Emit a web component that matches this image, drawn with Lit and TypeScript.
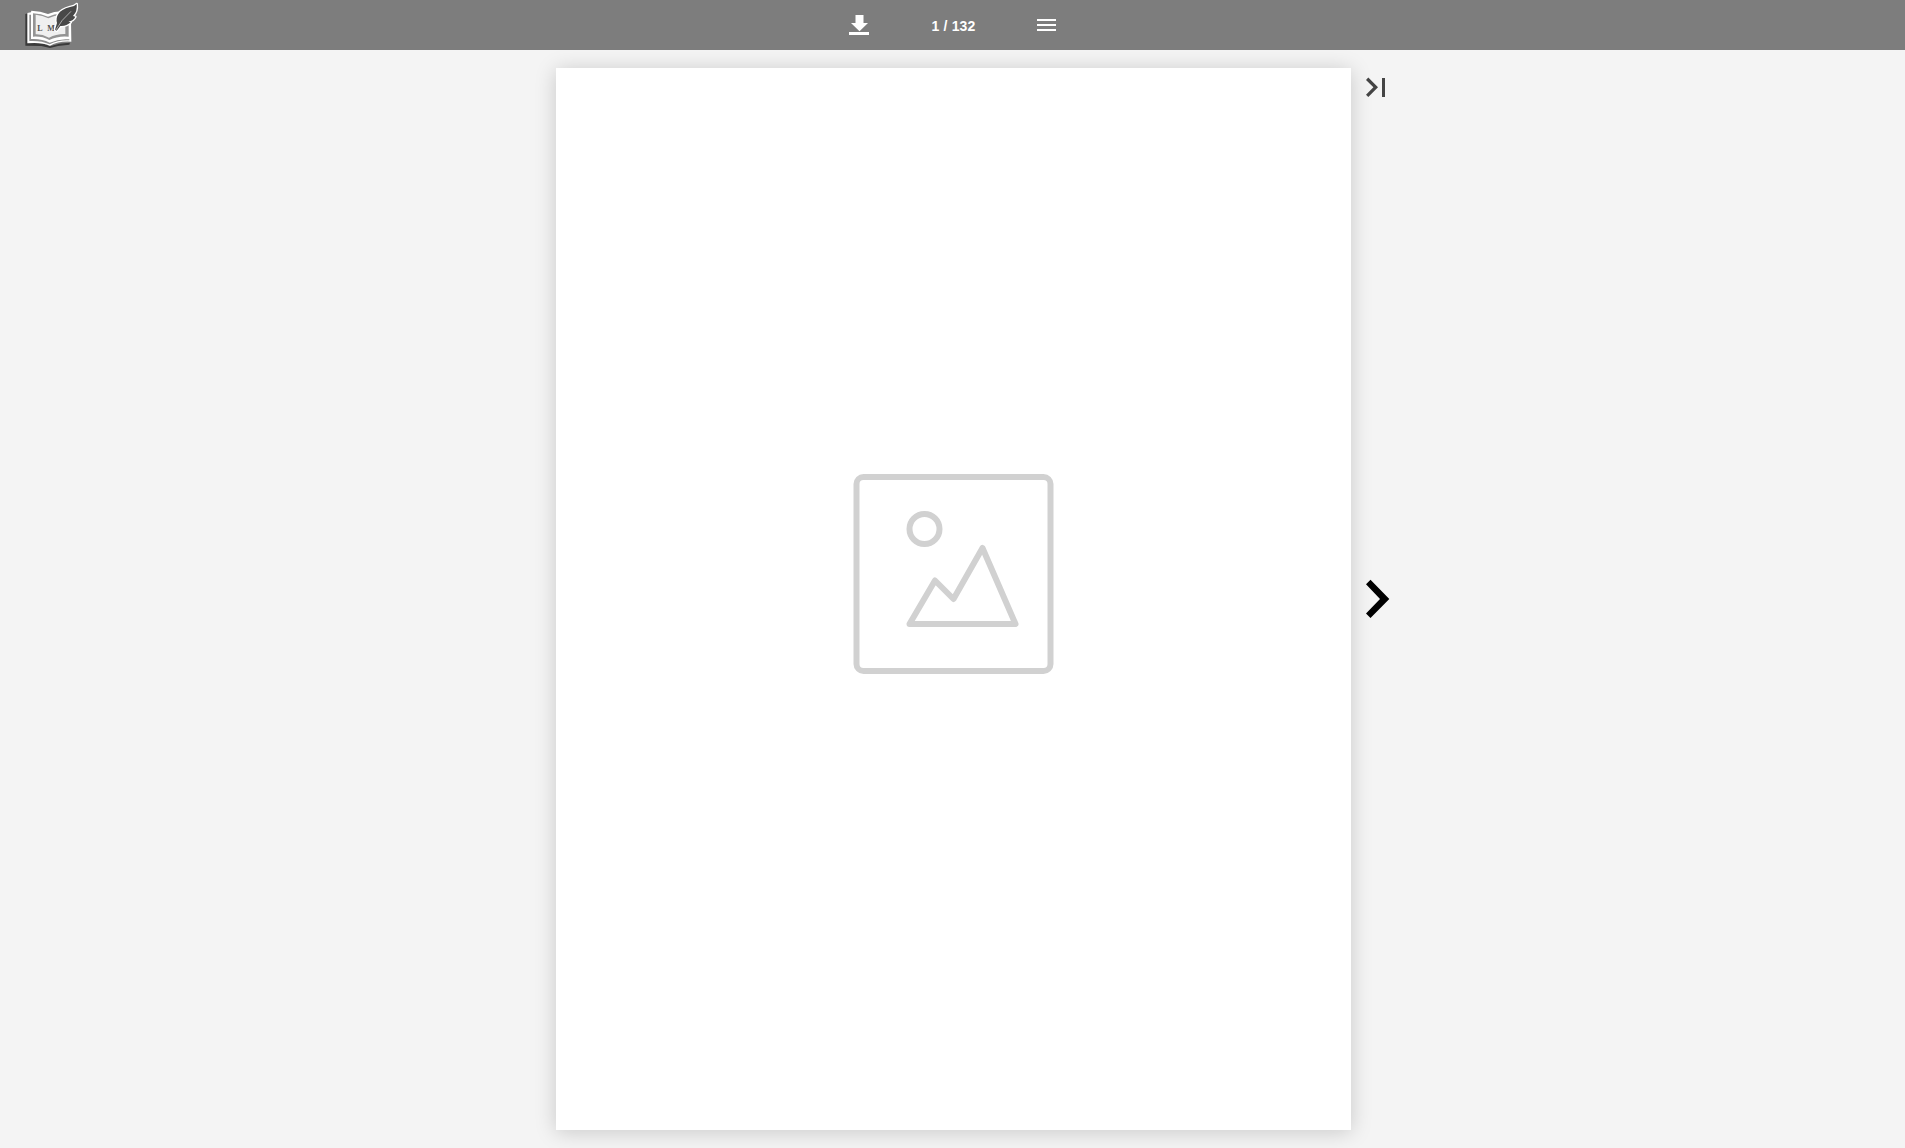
import { LitElement, html, css } from "lit";
import { customElement, property } from "lit/decorators.js";

@customElement("book-logo")
class BookLogo extends LitElement {
  static styles = css`
    :host { display: block; }
    svg { display: block; }
    .letters { font: bold 24px "Liberation Serif", serif; fill: #505050; }
  `;
  render() {
    return html`<svg width="75" height="50" viewBox="0 0 225 150">
      <g transform="translate(21 0)">
        <path d="M10 42 L18 40 L22 128 L62 130 L84 139 L112 131 L144 128 L142 134 L108 138 L84 144 L58 138 L10 137Z" fill="#3a3a3a" />
        <path d="M16 39 L27 37 L28 32 Q56 33 78 42 Q98 33 122 34 L147 60 L148 125 Q112 122 84 137 Q58 126 16 130Z" fill="#fff" />
        <path d="M22 44 L27 44 L27 117 Q58 115 83 128 Q112 115 142 118 L142 121 Q110 119 83 133 Q58 121 22 123Z" fill="#8d8d8d" />
        <path d="M33 40 Q58 41 78 50 Q96 41 118 41 L140 70 L140 110 Q108 107 82 120 Q60 108 33 110Z" fill="#949494" />
        <path d="M41 44 Q62 46 79 55 Q96 46 118 45 L130 72 L130 102 Q104 101 81 113 Q60 102 41 103Z" fill="#f0f0f0" />
        <text class="letters" x="46" y="93">L</text>
        <text class="letters" x="76" y="93">M</text>
        <path d="M164 12 Q158 19 144 21 Q117 28 109 42 Q101 54 105 69 L99 89 L104 92 L115 78 Q134 79 146 67 L139 65 Q155 62 160 50 L153 48 Q167 34 164 12Z" fill="#484848" stroke="#fff" stroke-width="8" stroke-linejoin="round" paint-order="stroke" />
        <path d="M101 91 Q117 60 147 34" fill="none" stroke="#ddd" stroke-width="2" />
      </g>
    </svg>`;
  }
}

@customElement("viewer-toolbar")
class ViewerToolbar extends LitElement {
  @property({ type: Number }) page = 1;
  @property({ type: Number }) total = 132;
  static styles = css`
    :host {
      display: grid; grid-template-columns: 1fr 208px 1fr; height: 50px;
      background: #7d7d7d; color: #fff; font: bold 14px/50px "Liberation Sans", Arial, sans-serif;
    }
    .brand { padding-left: 15px; }
    .controls { display: grid; grid-template-columns: 20px 1fr 20px; }
    .count { text-align: center; padding: 1px 0 0 2px; height: 49px; letter-spacing: 0.15px; }
    svg { display: block; }
  `;
  render() {
    return html`
      <book-logo class="brand"></book-logo>
      <div class="controls">
        <svg width="20" height="50" viewBox="0 0 20 50" fill="#fff">
          <path d="M6.500 15H14.500V23H19L10.500 31.200L2 23H6.500Z" /><path d="M0 32H20V35H0Z" />
        </svg>
        <span class="count">${this.page} / ${this.total}</span>
        <svg width="20" height="50" viewBox="0 0 20 50" fill="#fff">
          <path d="M0 19H19V21H0ZM0 24H19V26H0ZM0 29H19V31H0Z" />
        </svg>
      </div>`;
  }
}

@customElement("page-sheet")
class PageSheet extends LitElement {
  static styles = css`
    :host {
      display: flex; align-items: center; justify-content: center; box-sizing: border-box;
      width: 795px; height: 1062px; padding: 0 1px 50px 0; background: #fff;
      box-shadow: 0 2px 20px rgba(0, 0, 0, 0.18);
    }
    svg { display: block; overflow: visible; }
  `;
  render() {
    return html`<svg width="200" height="200" viewBox="-0.5 0 200 200" fill="none" stroke="#d1d1d1" stroke-width="6" stroke-linejoin="round">
      <rect x="3" y="3" width="194" height="194" rx="7" />
      <circle cx="71" cy="55" r="15" />
      <path d="M56 150L81.500 106.500L100 125L129 74L162 150Z" />
    </svg>`;
  }
}

@customElement("app-root")
class AppRoot extends LitElement {
  static styles = css`
    :host { display: flex; flex-direction: column; height: 1148px; overflow: hidden; background: #f4f4f4; }
    viewer-toolbar { flex: none; position: relative; z-index: 1; }
    .stage { flex: 1; display: grid; grid-template-columns: 556px 795px 1fr; padding-top: 18px; }
    .sheet { grid-column: 2; }
    .nav { display: flex; flex-direction: column; padding: 9px 0 0 15px; z-index: 1; }
    .next { margin-top: 481px; }
    svg { display: block; }
  `;
  render() {
    return html`
      <viewer-toolbar .page=${1} .total=${132}></viewer-toolbar>
      <main class="stage">
        <page-sheet class="sheet"></page-sheet>
        <nav class="nav">
          <svg width="20" height="21" viewBox="0 0 20 21" fill="#444">
            <path d="M2.300 .6L12 10.300L2.300 20L0 17.700L7.400 10.300L0 2.900ZM16 1H19V20H16Z" />
          </svg>
          <svg class="next" width="24" height="40" viewBox="0 0 24 40">
            <path d="M4.500 .8L23.300 20L4.500 39L0 34.600L14 20L0 5.200Z" />
          </svg>
        </nav>
      </main>`;
  }
}
